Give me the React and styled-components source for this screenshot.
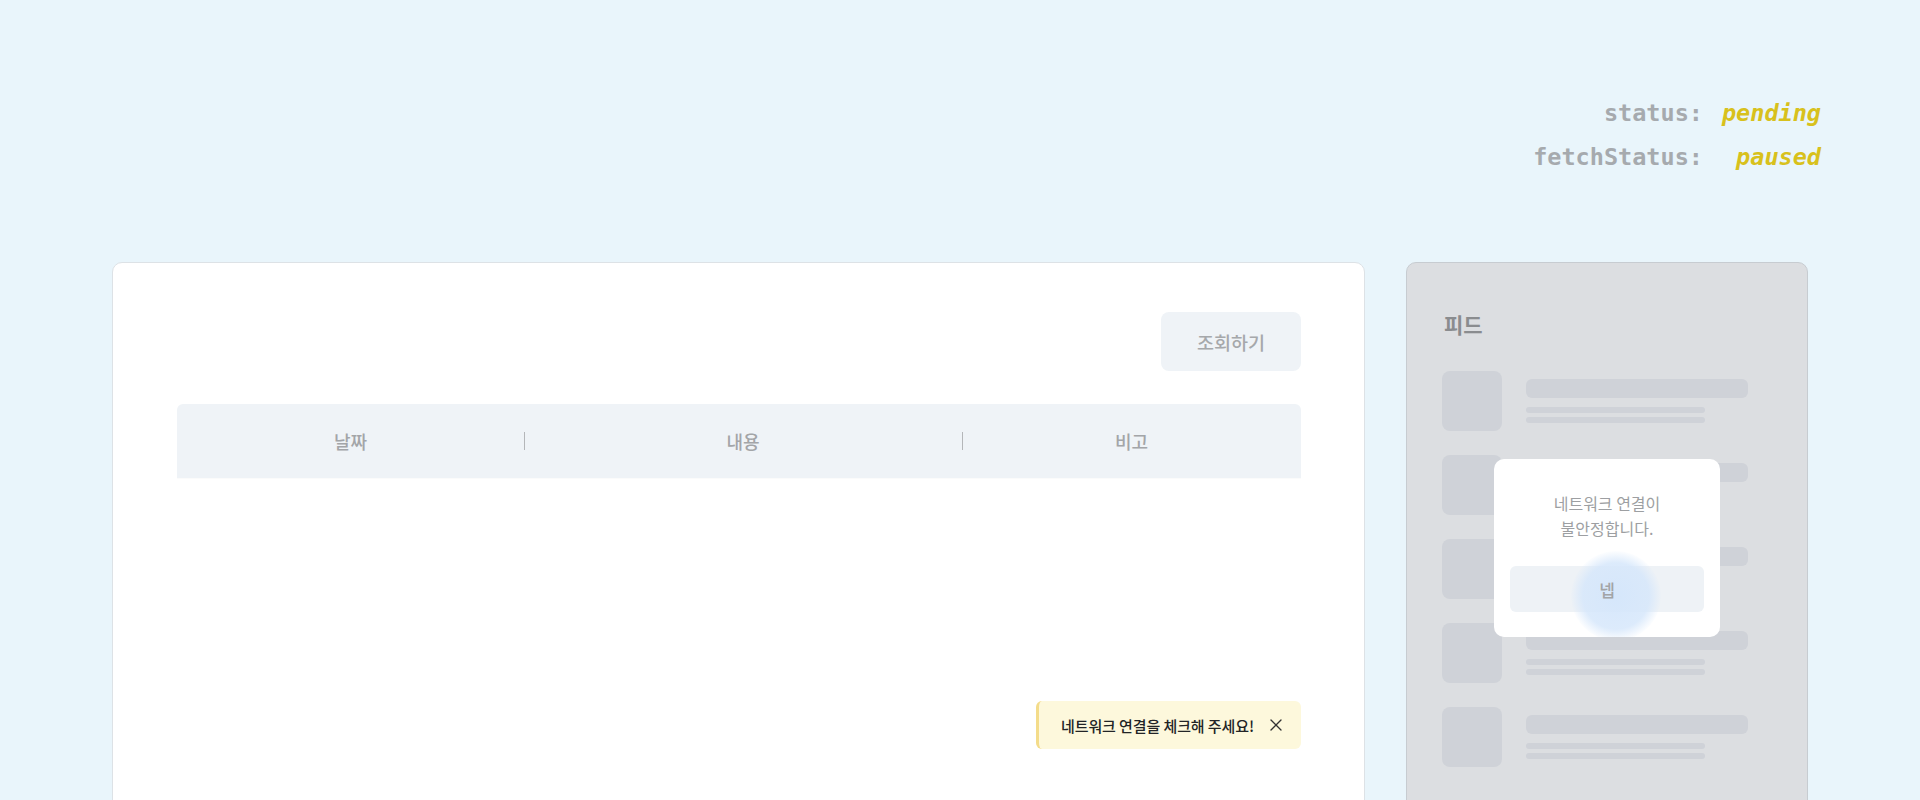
import React from "react";
import styled, { createGlobalStyle } from "styled-components";
import { X } from "lucide-react";

const GlobalStyle = createGlobalStyle`
  body {
    margin: 0;
    background: #e9f5fb;
    font-family: "Noto Sans CJK KR", "Noto Sans", sans-serif;
  }
`;

const Page = styled.div`
  min-height: 100vh;
`;

// status block top right

const StatusBar = styled.div`
  display: flex;
  justify-content: flex-end;
  padding: 91px 99px 0 0;
`;

const StatusGrid = styled.div`
  display: grid;
  grid-template-columns: auto auto;
  column-gap: 19px;
  font-family: "DejaVu Sans Mono", "Liberation Mono", monospace;
  font-size: 23.5px;
  font-weight: bold;
  line-height: 44px;
`;

const StatusLabel = styled.span`
  justify-self: end;
  color: #a6aaae;
`;

const StatusValue = styled.span`
  justify-self: end;
  color: #d8c11c;
  font-style: italic;
`;

const Content = styled.div`
  display: flex;
  align-items: flex-start;
  gap: 41px;
  padding: 83px 112px 0;
`;

const MainCard = styled.div`
  position: relative;
  flex: 1;
  box-sizing: border-box;
  height: 572px;
  padding: 49px 63px 0 64px;
  background: #ffffff;
  border: 1px solid #dde2e6;
  border-radius: 10px;
`;

const Toolbar = styled.div`
  display: flex;
  justify-content: flex-end;
`;

const SearchButton = styled.button`
  width: 140px;
  height: 59px;
  border: none;
  border-radius: 8px;
  background: #eff3f7;
  color: #a6a8ab;
  font-family: inherit;
  font-size: 18.5px;
  font-weight: 500;
  cursor: pointer;
`;

const TableHeader = styled.div`
  display: grid;
  grid-template-columns: 347px 438px 1fr;
  height: 74px;
  margin-top: 33px;
  background: #eff3f7;
  border-radius: 6px 6px 0 0;
  box-shadow: 0 1px 1px rgba(0, 0, 0, 0.02);
`;

const HeaderCell = styled.div`
  position: relative;
  display: flex;
  align-items: center;
  justify-content: center;
  color: #a3a5a8;
  font-size: 18px;
  font-weight: 500;

  ${(p) =>
    p.$divided &&
    `
    &::before {
      content: "";
      position: absolute;
      left: 0;
      top: 28px;
      width: 1px;
      height: 18px;
      background: #b4b6b9;
    }
  `}
`;

const Toast = styled.div`
  position: absolute;
  right: 63px;
  bottom: 84px;
  display: flex;
  align-items: center;
  gap: 12px;
  box-sizing: border-box;
  width: 265px;
  height: 48px;
  padding-left: 22px;
  background: #fdf8dc;
  border-left: 3px solid #f4dc8a;
  border-radius: 6px;
  color: #222426;
  font-size: 15px;
  font-weight: 500;
  letter-spacing: -0.1px;
  white-space: nowrap;
`;

const CloseIcon = styled(X)`
  color: #333;
  flex-shrink: 0;
`;

// feed panel (dimmed, with dialog on top)

const SidePanel = styled.div`
  position: relative;
  box-sizing: border-box;
  width: 402px;
  height: 572px;
  padding: 46px 35px 0;
  background: #dcdee1;
  border: 1px solid #c7ccd1;
  border-radius: 10px;
  overflow: hidden;
`;

const PanelTitle = styled.h3`
  margin: 0 0 32px;
  padding-left: 2px;
  color: #8a8c8f;
  font-size: 21px;
  font-weight: 700;
  line-height: 30px;
`;

const FeedList = styled.div`
  display: flex;
  flex-direction: column;
  gap: 24px;
`;

const FeedItem = styled.div`
  display: flex;
  gap: 24px;
`;

const Thumb = styled.div`
  width: 60px;
  height: 60px;
  border-radius: 8px;
  background: #cfd2d8;
`;

const Lines = styled.div`
  display: flex;
  flex-direction: column;
  padding-top: 8px;
`;

const Bar = styled.div`
  width: ${(p) => (p.$wide ? "222px" : "179px")};
  height: ${(p) => (p.$wide ? "19px" : "6px")};
  margin-top: ${(p) => p.$mt || 0}px;
  border-radius: ${(p) => (p.$wide ? "6px" : "3px")};
  background: #cfd2d8;
`;

const Dialog = styled.div`
  position: absolute;
  left: 50%;
  top: 50%;
  transform: translate(-50%, -50%);
  box-sizing: border-box;
  width: 226px;
  height: 178px;
  padding: 32px 16px 0;
  background: #ffffff;
  border-radius: 10px;
  overflow: hidden;
  text-align: center;
`;

const DialogText = styled.p`
  margin: 0;
  color: #9d9fa2;
  font-size: 16px;
  line-height: 25px;
`;

const ConfirmButton = styled.button`
  position: relative;
  width: 194px;
  height: 46px;
  margin-top: 25px;
  border: none;
  border-radius: 6px;
  background: #eef2f6;
  color: #a2a4a7;
  font-family: inherit;
  font-size: 17px;
  font-weight: 500;
`;

const Ripple = styled.span`
  position: absolute;
  left: 61px;
  top: -15px;
  width: 90px;
  height: 90px;
  border-radius: 50%;
  background: radial-gradient(
    circle,
    rgba(212, 230, 251, 0.95) 0%,
    rgba(214, 231, 251, 0.85) 52%,
    rgba(224, 237, 252, 0) 72%
  );
`;

const ButtonLabel = styled.span`
  position: relative;
`;

const feed = [1, 2, 3, 4, 5];

export default function App() {
  return (
    <Page>
      <GlobalStyle />
      <StatusBar>
        <StatusGrid>
          <StatusLabel>status:</StatusLabel>
          <StatusValue>pending</StatusValue>
          <StatusLabel>fetchStatus:</StatusLabel>
          <StatusValue>paused</StatusValue>
        </StatusGrid>
      </StatusBar>

      <Content>
        <MainCard>
          <Toolbar>
            <SearchButton>조회하기</SearchButton>
          </Toolbar>
          <TableHeader>
            <HeaderCell>날짜</HeaderCell>
            <HeaderCell $divided>내용</HeaderCell>
            <HeaderCell $divided>비고</HeaderCell>
          </TableHeader>
          <Toast>
            네트워크 연결을 체크해 주세요!
            <CloseIcon size={20} strokeWidth={1.6} />
          </Toast>
        </MainCard>

        <SidePanel>
          <PanelTitle>피드</PanelTitle>
          <FeedList>
            {feed.map((n) => (
              <FeedItem key={n}>
                <Thumb />
                <Lines>
                  <Bar $wide />
                  <Bar $mt={9} />
                  <Bar $mt={4} />
                </Lines>
              </FeedItem>
            ))}
          </FeedList>
          <Dialog>
            <DialogText>
              네트워크 연결이
              <br />
              불안정합니다.
            </DialogText>
            <ConfirmButton>
              <Ripple />
              <ButtonLabel>넵</ButtonLabel>
            </ConfirmButton>
          </Dialog>
        </SidePanel>
      </Content>
    </Page>
  );
}
